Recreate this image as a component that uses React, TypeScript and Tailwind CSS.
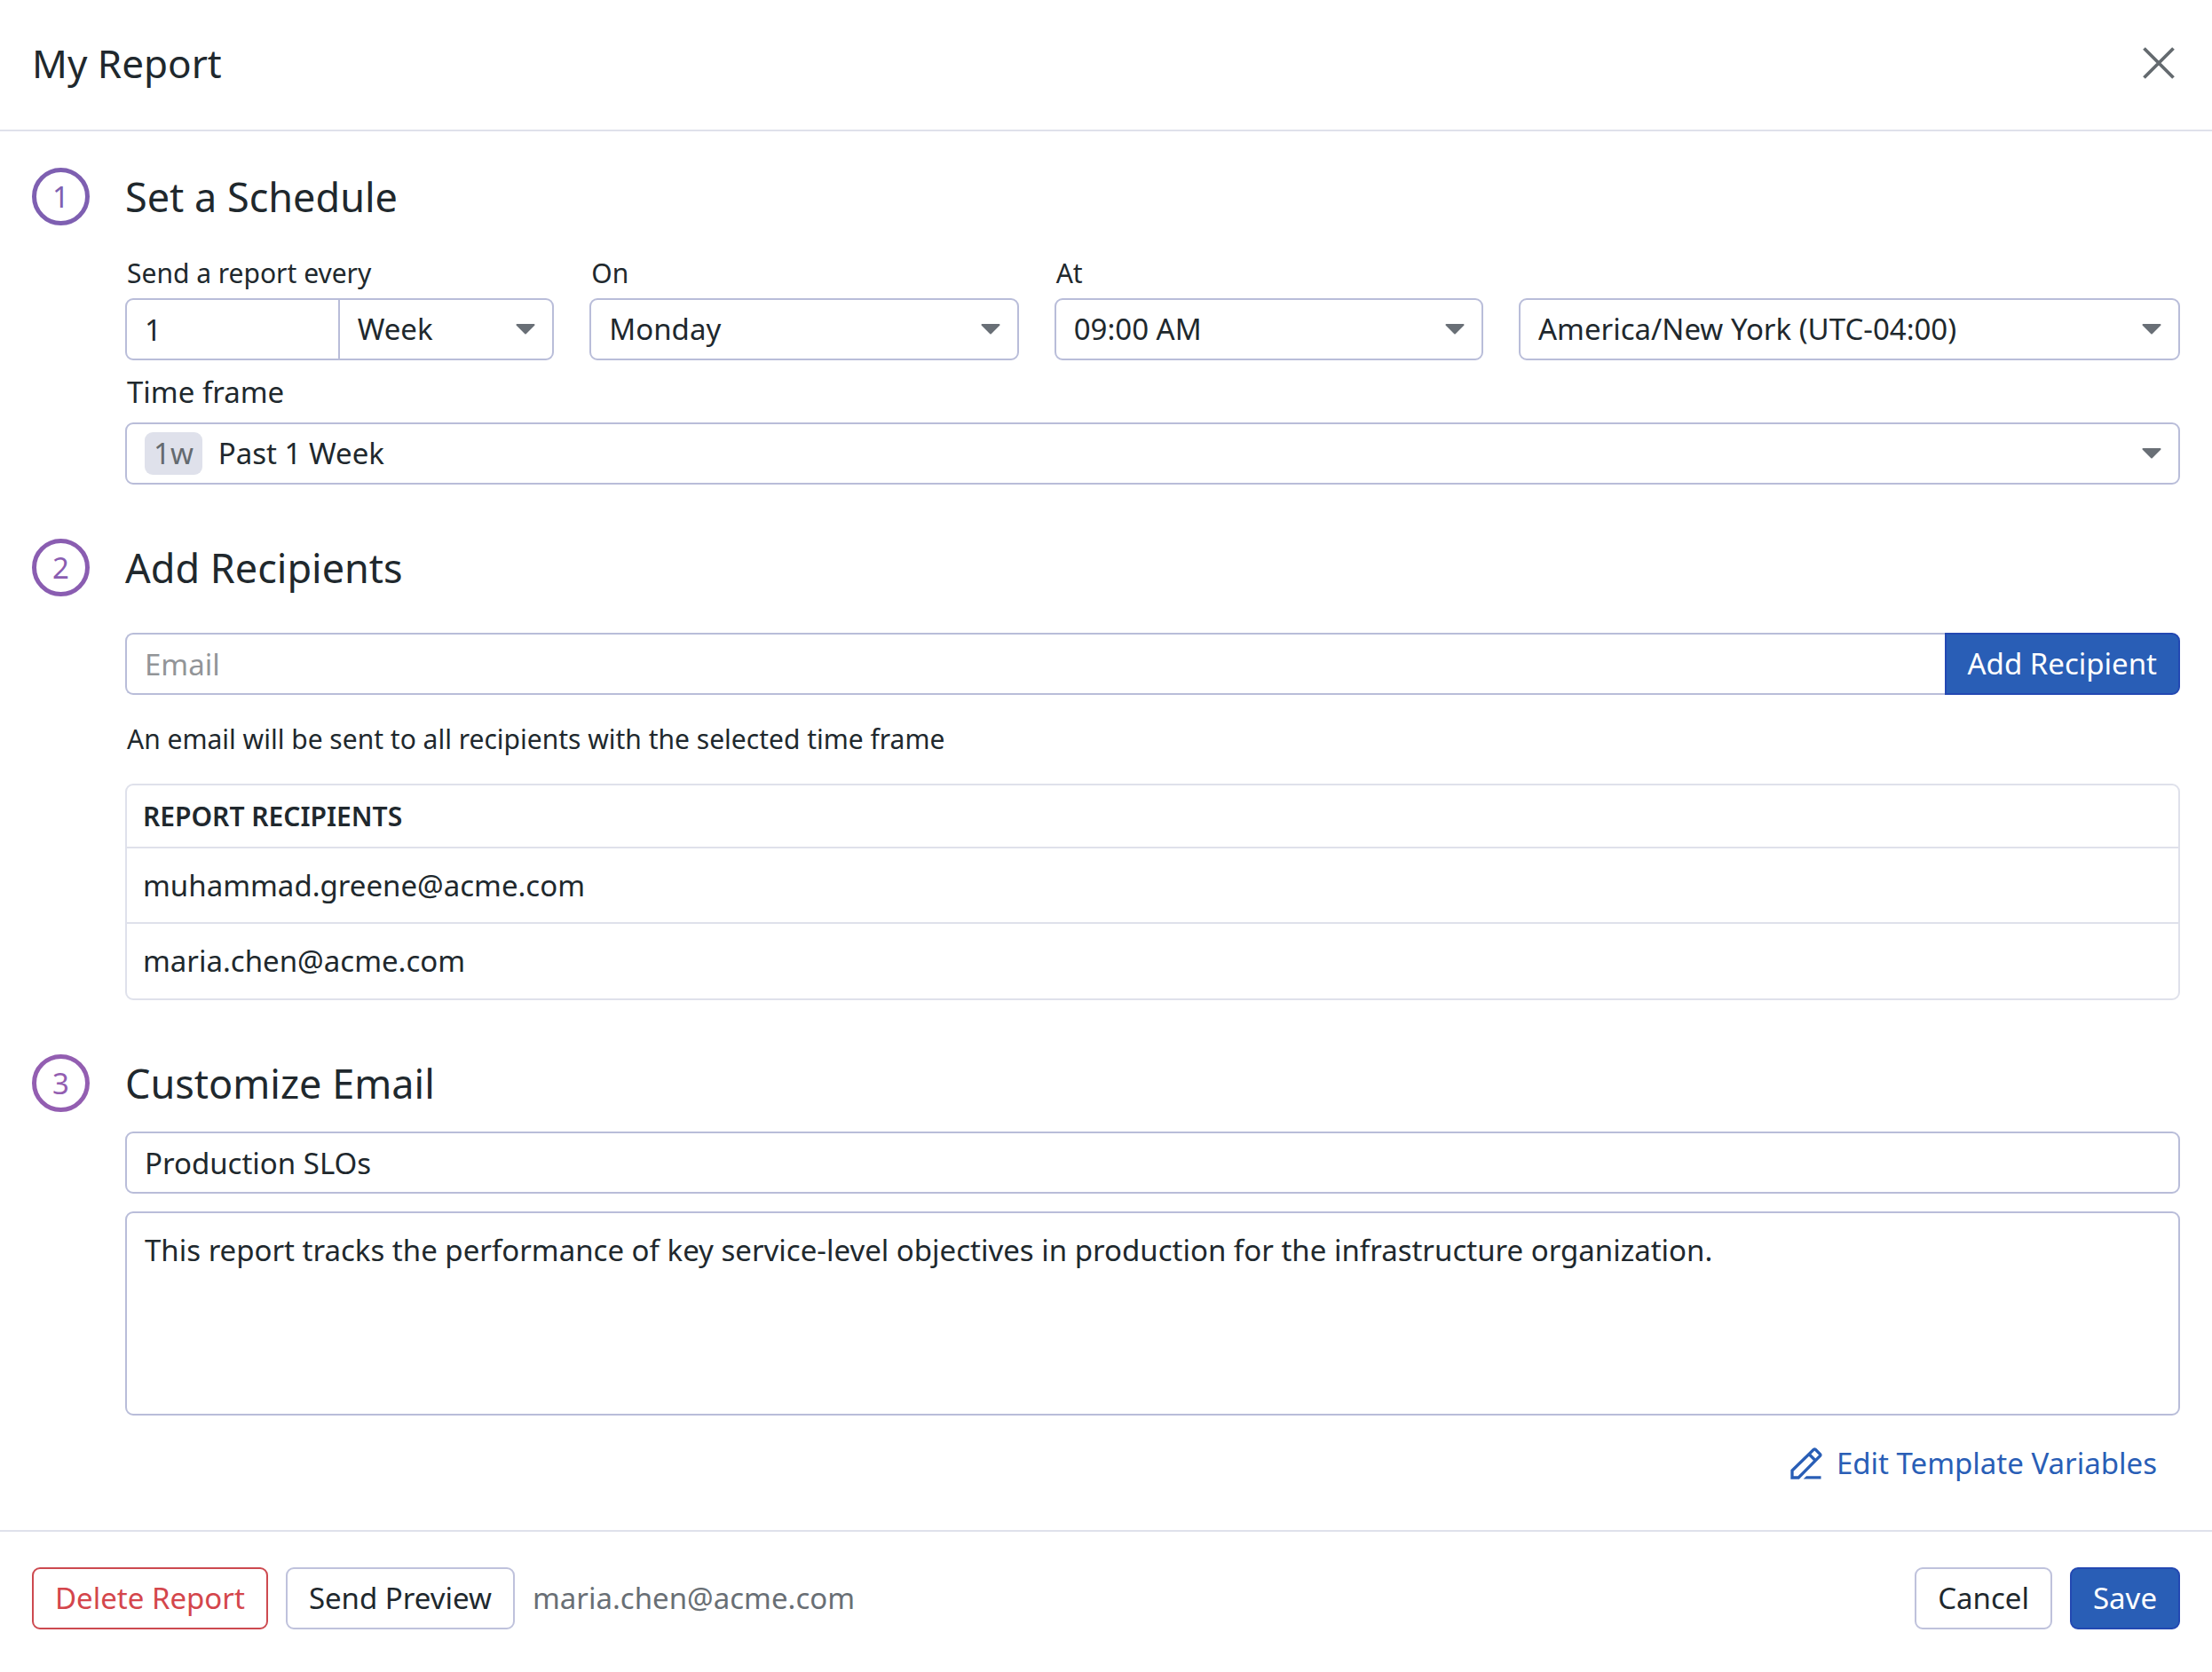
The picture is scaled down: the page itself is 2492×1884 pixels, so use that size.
import clsx from 'clsx'
import { useState, type ChangeEvent, type FormEvent, type ReactNode } from 'react'

const fieldBox = 'h-[70px] w-full border-2 border-[#b9bdd9] bg-white px-5 text-[33px] outline-none'

const secondaryButton =
  'h-[70px] cursor-pointer rounded-[9px] border-2 border-[#bfc2dc] bg-white px-6'
const primaryButton =
  'h-[70px] cursor-pointer border-2 border-[#2348b2] bg-[#295eb6] px-6 text-white'

const Caret = () => (
  <svg
    className="pointer-events-none absolute top-1/2 right-5 h-3 w-6 -translate-y-1/2"
    viewBox="0 0 24 12"
    aria-hidden="true"
  >
    <path
      d="M2.5 1h19L12 10.5z"
      fill="#696f76"
      stroke="#696f76"
      strokeWidth="2"
      strokeLinejoin="round"
    />
  </svg>
)

const CloseIcon = () => (
  <svg className="size-9" viewBox="0 0 36 36" aria-hidden="true">
    <path d="M1.5 1.5l33 33M34.5 1.5l-33 33" stroke="#646a6f" strokeWidth="3.8" />
  </svg>
)

const PencilIcon = () => (
  <svg
    className="size-9"
    viewBox="0 0 36 36"
    fill="none"
    stroke="currentColor"
    strokeWidth="3.3"
    aria-hidden="true"
  >
    <path d="M2 34v-8L26.300 2.300q1-.8 2 0l5.200 5.200q.8 1 0 2L9.200 34z" />
    <path d="M21 7.500l7.500 7.500" />
    <path d="M18 32.300h16.500v3.300H14.700z" fill="currentColor" stroke="none" />
  </svg>
)

type SelectFieldProps = {
  id: string
  label?: string
  ariaLabel?: string
  options: string[]
  className?: string
}

const SelectField = ({ id, label, ariaLabel, options, className }: SelectFieldProps) => (
  <div className={clsx('flex flex-col justify-end', className)}>
    {label && (
      <label htmlFor={id} className="mb-2 pl-0.5 text-[30px] leading-10">
        {label}
      </label>
    )}
    <div className="relative">
      <select
        id={id}
        aria-label={ariaLabel}
        className={clsx(fieldBox, 'appearance-none rounded-[9px]')}
      >
        {options.map((option) => (
          <option key={option}>{option}</option>
        ))}
      </select>
      <Caret />
    </div>
  </div>
)

type StepProps = {
  number: number
  title: string
  color: string
  children: ReactNode
}

const Step = ({ number, title, color, children }: StepProps) => (
  <section className="flex gap-10">
    <div
      className={clsx(
        'flex size-[65px] shrink-0 items-center justify-center rounded-full border-[5px] text-[33px]',
        color
      )}
    >
      {number}
    </div>
    <div className="min-w-0 flex-1">
      <h2 className="text-[45px] leading-[65px]">{title}</h2>
      {children}
    </div>
  </section>
)

const App = () => {
  const [recipients, setRecipients] = useState<string[]>([
    'muhammad.greene@acme.com',
    'maria.chen@acme.com',
  ])
  const [email, setEmail] = useState<string>('')

  const handleChangeEmail = (event: ChangeEvent<HTMLInputElement>) => {
    setEmail(event.target.value)
  }

  const handleSubmit = (event: FormEvent<HTMLFormElement>) => {
    event.preventDefault()
    if (email.trim().length === 0) return
    setRecipients([...recipients, email.trim()])
    setEmail('')
  }

  return (
    <div className="min-h-screen bg-white font-['Noto_Sans',sans-serif] text-[33px] text-[#20282d]">
      <header className="flex items-center justify-between border-b-2 border-[#dfe1eb] pt-[38px] pr-[42px] pb-[42px] pl-9">
        <h1 className="text-[44px] leading-[66px]">My Report</h1>
        <button type="button" aria-label="Close" className="cursor-pointer">
          <CloseIcon />
        </button>
      </header>

      <main className="flex flex-col px-9 pt-[41px] pb-10">
        <Step number={1} title="Set a Schedule" color="border-[#7e5fb1] text-[#7e5fb1]">
          <div className="mt-[34px] grid grid-cols-9 gap-x-10">
            <div className="col-span-2">
              <label htmlFor="interval" className="mb-2 block pl-0.5 text-[30px] leading-10">
                Send a report every
              </label>
              <div className="grid grid-cols-2">
                <input
                  id="interval"
                  type="text"
                  defaultValue="1"
                  className={clsx(fieldBox, 'rounded-l-[9px]')}
                />
                <div className="relative">
                  <select
                    aria-label="Interval unit"
                    className={clsx(fieldBox, 'appearance-none rounded-r-[9px] border-l-0')}
                  >
                    <option>Week</option>
                    <option>Month</option>
                  </select>
                  <Caret />
                </div>
              </div>
            </div>
            <SelectField
              id="day"
              label="On"
              options={['Monday', 'Tuesday', 'Wednesday', 'Thursday', 'Friday']}
              className="col-span-2"
            />
            <SelectField
              id="time"
              label="At"
              options={['09:00 AM', '10:00 AM', '11:00 AM']}
              className="col-span-2"
            />
            <SelectField
              id="timezone"
              ariaLabel="Time zone"
              options={['America/New York (UTC-04:00)', 'UTC']}
              className="col-span-3"
            />
          </div>
          <label htmlFor="timeframe" className="mt-4 mb-3.5 block pl-0.5 leading-10">
            Time frame
          </label>
          <div className="relative">
            <div className="flex h-[70px] items-center rounded-[9px] border-2 border-[#b9bdd9] pl-5">
              <span className="flex h-12 items-center rounded-[9px] bg-[#dfe1eb] px-2.5 text-[#646a6f]">
                1w
              </span>
              <select
                id="timeframe"
                className="h-full flex-1 appearance-none bg-transparent px-[18px] outline-none"
              >
                <option>Past 1 Week</option>
                <option>Past 1 Month</option>
              </select>
            </div>
            <Caret />
          </div>
        </Step>

        <div className="mt-[61px]">
          <Step number={2} title="Add Recipients" color="border-[#8a5db1] text-[#8a5db1]">
            <form className="mt-[41px] flex" onSubmit={handleSubmit}>
              <input
                type="email"
                aria-label="Email"
                placeholder="Email"
                value={email}
                onChange={handleChangeEmail}
                className={clsx(
                  fieldBox,
                  'min-w-0 flex-1 rounded-l-[9px] border-r-0 placeholder:text-[#929598]'
                )}
              />
              <button type="submit" className={clsx(primaryButton, 'rounded-r-[9px]')}>
                Add Recipient
              </button>
            </form>
            <p className="my-[30px] pl-0.5 text-[30px] leading-10">
              An email will be sent to all recipients with the selected time frame
            </p>
            <div className="rounded-[9px] border-2 border-[#dfe1eb]">
              <table className="w-full text-left">
                <thead>
                  <tr>
                    <th className="h-[70px] px-[18px] text-[30px] leading-10 font-semibold uppercase">
                      Report Recipients
                    </th>
                  </tr>
                </thead>
                <tbody>
                  {recipients.map((recipient) => (
                    <tr key={recipient} className="border-t-2 border-[#dfe1eb]">
                      <td className="h-[85px] px-[18px] leading-10">{recipient}</td>
                    </tr>
                  ))}
                </tbody>
              </table>
            </div>
          </Step>
        </div>

        <div className="mt-[61px]">
          <Step number={3} title="Customize Email" color="border-[#935eb1] text-[#935eb1]">
            <input
              type="text"
              aria-label="Email subject"
              defaultValue="Production SLOs"
              className={clsx(fieldBox, 'mt-[22px] block rounded-[9px]')}
            />
            <textarea
              aria-label="Email message"
              rows={4}
              defaultValue="This report tracks the performance of key service-level objectives in production for the infrastructure organization."
              className="mt-5 block w-full resize-none rounded-[9px] border-2 border-[#b9bdd9] px-5 pt-[18px] pb-4 leading-12 outline-none"
            />
            <div className="mt-[19px] flex justify-end pr-[26px]">
              <button
                type="button"
                className="flex h-[70px] cursor-pointer items-center gap-4 text-[#295eb6]"
              >
                <PencilIcon />
                Edit Template Variables
              </button>
            </div>
          </Step>
        </div>
      </main>

      <footer className="flex items-center gap-5 border-t-2 border-[#dfe1eb] px-9 py-10">
        <button
          type="button"
          className="h-[70px] cursor-pointer rounded-[9px] border-2 border-[#cd4a50] bg-white px-6 text-[#d4464c]"
        >
          Delete Report
        </button>
        <button type="button" className={secondaryButton}>
          Send Preview
        </button>
        <span className="text-[#696f75]">maria.chen@acme.com</span>
        <button type="button" className={clsx(secondaryButton, 'ml-auto')}>
          Cancel
        </button>
        <button type="button" className={clsx(primaryButton, 'rounded-[9px]')}>
          Save
        </button>
      </footer>
    </div>
  )
}

export default App
